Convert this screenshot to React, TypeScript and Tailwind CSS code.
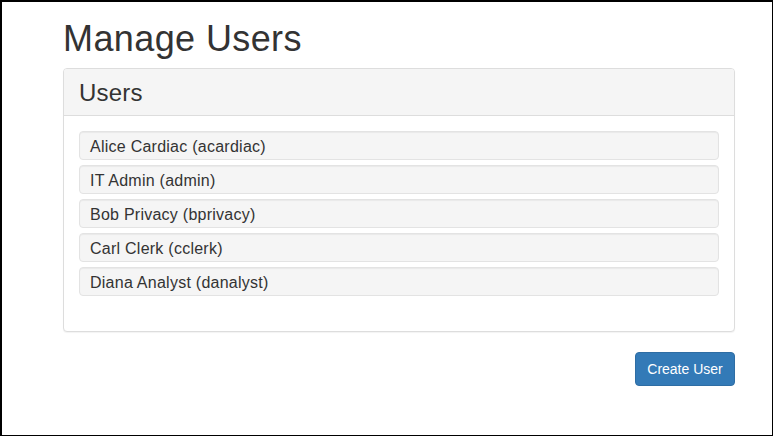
const users = [
  { name: "Alice Cardiac", login: "acardiac" },
  { name: "IT Admin", login: "admin" },
  { name: "Bob Privacy", login: "bprivacy" },
  { name: "Carl Clerk", login: "cclerk" },
  { name: "Diana Analyst", login: "danalyst" },
];

export default function App() {
  return (
    <div className="w-[774px] h-[437px] bg-white">
      <div className="w-[773px] h-[436px] border-t-2 border-l-2 border-r border-b border-black bg-white text-[#333] font-['Liberation_Sans',Arial,sans-serif] pl-[61px] pr-[37px]">
        <h1 className="text-[36px] leading-[39.6px] mt-[17px] mb-[9px] tracking-[0.4px]">Manage Users</h1>

        <div className="border border-[#ddd] rounded-[4px] shadow-[0_1px_1px_rgba(0,0,0,0.05)] bg-white">
          <div className="bg-[#f5f5f5] border-b border-[#ddd] rounded-t-[3px] px-[15px] pt-[11px] pb-[9px]">
            <h3 className="text-[24px] leading-[26.4px] tracking-[0.2px]">Users</h3>
          </div>
          <div className="p-[15px]">
            <ul className="flex flex-col gap-[5px] mb-[20px]">
              {users.map((u) => (
                <li
                  key={u.login}
                  className="h-[29px] flex items-center px-[10px] pt-[3px] bg-[#f5f5f5] border border-[#e3e3e3] rounded-[4px] shadow-[inset_0_1px_1px_rgba(0,0,0,0.05)] text-[16px] tracking-[0.25px]"
                >
                  {u.name} ({u.login})
                </li>
              ))}
            </ul>
          </div>
        </div>

        <div className="flex justify-end mt-[20px]">
          <button className="h-[34px] w-[100px] bg-[#337ab7] border border-[#2e6da4] rounded-[4px] text-white text-[14px]">
            Create User
          </button>
        </div>
      </div>
    </div>
  );
}
